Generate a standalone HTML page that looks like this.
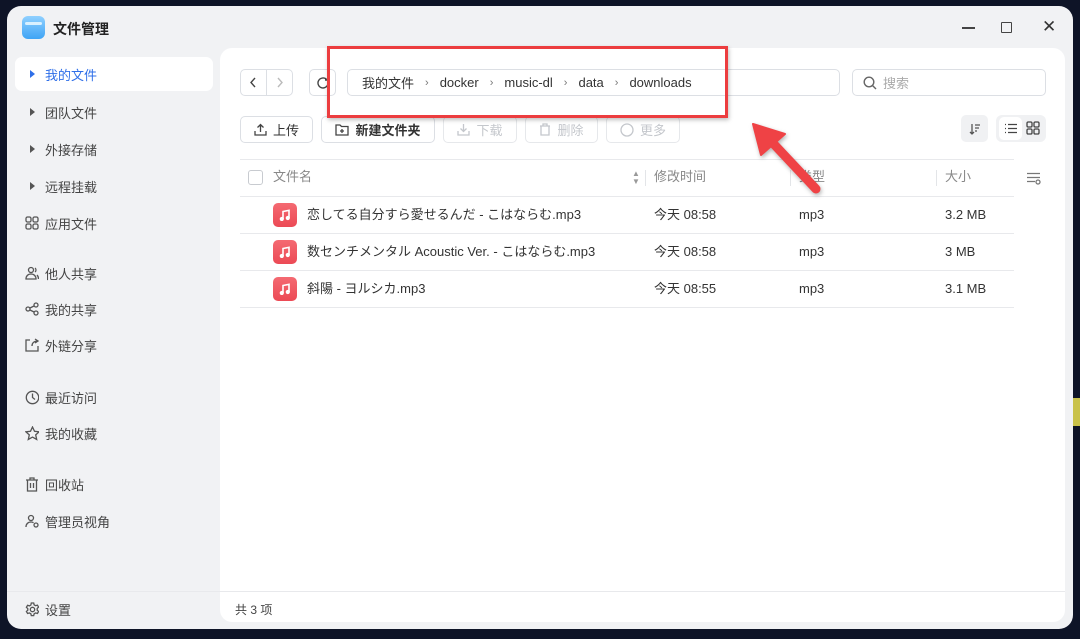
<!DOCTYPE html>
<html><head><meta charset="utf-8"><style>
*{margin:0;padding:0;box-sizing:border-box}
body{width:1080px;height:639px;overflow:hidden;background:#0e1427;font-family:"Liberation Sans","Noto Sans CJK SC",sans-serif;position:relative;color:#333}
.abs{position:absolute}
.win{left:7px;top:6px;width:1066px;height:623px;background:#f1f2f4;border-radius:14px;overflow:hidden}
.panel{left:213px;top:42px;width:845px;height:574px;background:#fff;border-radius:12px}
.nav{left:8px;width:198px;height:34px;border-radius:7px;font-size:13px;color:#444;display:flex;align-items:center}
.nav .ic{width:14px;margin-left:10px;margin-right:6px;display:flex;justify-content:center}
.tri{width:0;height:0;border-left:5px solid #555;border-top:4px solid transparent;border-bottom:4px solid transparent}
.btn{height:27px;border:1px solid #dcdfe4;border-radius:5px;font-size:13px;display:flex;align-items:center;justify-content:center;gap:6px;background:#fff}
.dis{color:#c4c7cc;border-color:#e6e8eb}
.hl{height:1px;background:#e8e9ec}
.th{font-size:13px;color:#888;top:169px;line-height:16px}
.td{font-size:13px;color:#333;line-height:16px}
.vd{width:1px;height:16px;background:#e3e5e8;top:170px}
.mic{width:24px;height:24px;border-radius:5px;background:linear-gradient(#f46a72,#ec4a55);display:flex;align-items:center;justify-content:center}
.sep{margin:0 11px;color:#777;font-size:11px}
</style></head><body>
<div class="abs" style="left:1073px;top:398px;width:7px;height:28px;background:#c9c24a"></div>
<div class="abs win">
 <div class="abs" style="left:15px;top:10px;width:23px;height:23px;border-radius:6px;background:linear-gradient(#8fd0ff,#3fa4f5)"><div style="margin:6px 3px 0;height:3px;background:#d8f0ff;border-radius:2px"></div></div>
 <div class="abs" style="left:46px;top:13px;font-size:14px;font-weight:bold;color:#222">文件管理</div>
 <div class="abs" style="left:955px;top:21px;width:13px;height:1.5px;background:#444"></div>
 <div class="abs" style="left:994px;top:16px;width:11px;height:11px;border:1.5px solid #444;border-radius:1px"></div>
 <div class="abs" style="left:1035px;top:11px;font-size:17px;color:#333">✕</div>

 <div class="abs nav" style="top:51px;background:#fff;color:#2f6fe8"><span class="ic"><span class="tri" style="border-left-color:#2f6fe8"></span></span>我的文件</div>
 <div class="abs nav" style="top:89px"><span class="ic"><span class="tri"></span></span>团队文件</div>
 <div class="abs nav" style="top:126px"><span class="ic"><span class="tri"></span></span>外接存储</div>
 <div class="abs nav" style="top:163px"><span class="ic"><span class="tri"></span></span>远程挂载</div>
 <div class="abs nav" style="top:200px"><span class="ic"><svg width="14" height="14" fill="none" stroke="#555" stroke-width="1.3"><rect x="1" y="1" width="5" height="5" rx="1.5"/><rect x="8" y="1" width="5" height="5" rx="1.5"/><rect x="1" y="8" width="5" height="5" rx="1.5"/><rect x="8" y="8" width="5" height="5" rx="1.5"/></svg></span>应用文件</div>
 <div class="abs nav" style="top:250px"><span class="ic"><svg width="14" height="14" fill="none" stroke="#555" stroke-width="1.3"><circle cx="6" cy="4" r="2.5"/><path d="M1 13c0-3 2-5 5-5s5 2 5 5zM10 2a2.5 2.5 0 010 4M12 9c1 1 1.5 2 1.5 4"/></svg></span>他人共享</div>
 <div class="abs nav" style="top:286px"><span class="ic"><svg width="14" height="14" fill="none" stroke="#555" stroke-width="1.3"><circle cx="3" cy="7" r="2"/><circle cx="11" cy="3" r="2"/><circle cx="11" cy="11" r="2"/><path d="M5 6l4-2M5 8l4 2"/></svg></span>我的共享</div>
 <div class="abs nav" style="top:322px"><span class="ic"><svg width="14" height="14" fill="none" stroke="#555" stroke-width="1.3"><path d="M5 2H1v11h12V8M7 8c0-3 2-5 6-5M10 1l3 2-3 2"/></svg></span>外链分享</div>
 <div class="abs nav" style="top:374px"><span class="ic"><svg width="15" height="15" fill="none" stroke="#555" stroke-width="1.3"><circle cx="7.5" cy="7.5" r="6.2"/><path d="M7.5 3.5v4l2.5 2"/></svg></span>最近访问</div>
 <div class="abs nav" style="top:410px"><span class="ic"><svg width="15" height="15" fill="none" stroke="#555" stroke-width="1.3"><path d="M7.5 1l2 4.3 4.6.5-3.4 3.1 1 4.6-4.2-2.4-4.2 2.4 1-4.6L.9 5.8l4.6-.5z"/></svg></span>我的收藏</div>
 <div class="abs nav" style="top:461px"><span class="ic"><svg width="14" height="15" fill="none" stroke="#555" stroke-width="1.3"><path d="M1 3h12M5 3V1h4v2M2.5 3v11h9V3M5.5 6v5M8.5 6v5"/></svg></span>回收站</div>
 <div class="abs nav" style="top:498px"><span class="ic"><svg width="14" height="14" fill="none" stroke="#555" stroke-width="1.3"><circle cx="6" cy="4" r="2.5"/><path d="M1 13c0-3 2-5 5-5 1 0 2 .3 2.5.7"/><circle cx="11" cy="11" r="2"/></svg></span>管理员视角</div>
 <div class="abs hl" style="left:0;top:585px;width:213px"></div>
 <div class="abs nav" style="top:586px"><span class="ic"><svg width="15" height="15" fill="none" stroke="#555" stroke-width="1.3"><circle cx="7.5" cy="7.5" r="2.2"/><path d="M6.3 1h2.4l.4 1.8 1.5.9 1.8-.6 1.2 2-1.4 1.3v1.8l1.4 1.3-1.2 2-1.8-.6-1.5.9-.4 1.8H6.3l-.4-1.8-1.5-.9-1.8.6-1.2-2 1.4-1.3V6.6L1.4 5.3l1.2-2 1.8.6 1.5-.9z"/></svg></span>设置</div>

 <div class="abs panel">
  <div class="abs hl" style="left:0;top:543px;width:845px"></div>
  <div class="abs" style="left:15px;top:553px;font-size:12px;color:#444">共 3 项</div>
 </div>
</div>

<!-- toolbar -->
<div class="abs btn" style="left:240px;top:69px;width:53px"></div>
<div class="abs" style="left:266px;top:69px;width:1px;height:27px;background:#dcdfe4"></div>
<svg class="abs" style="left:249px;top:77px" width="8" height="11" fill="none" stroke="#444" stroke-width="1.4"><path d="M6 1L2 5.5 6 10"/></svg>
<svg class="abs" style="left:276px;top:77px" width="8" height="11" fill="none" stroke="#bbb" stroke-width="1.4"><path d="M2 1l4 4.5L2 10"/></svg>
<div class="abs btn" style="left:309px;top:69px;width:27px"><svg width="14" height="14" fill="none" stroke="#444" stroke-width="1.4"><path d="M12 7a5 5 0 11-1.5-3.6M12 1v3H9"/></svg></div>
<div class="abs btn" style="left:347px;top:69px;width:493px;justify-content:flex-start;padding-left:14px;gap:0;color:#333">我的文件<span class="sep">›</span>docker<span class="sep">›</span>music-dl<span class="sep">›</span>data<span class="sep">›</span>downloads</div>
<div class="abs btn" style="left:852px;top:69px;width:194px;justify-content:flex-start;padding-left:10px;color:#aaa"><svg width="14" height="14" fill="none" stroke="#666" stroke-width="1.4"><circle cx="6" cy="6" r="4.8"/><path d="M9.5 9.5L13 13"/></svg>搜索</div>

<div class="abs btn" style="left:240px;top:116px;width:73px"><svg width="13" height="13" fill="none" stroke="#444" stroke-width="1.3"><path d="M6.5 9V1.5M3.5 4.5l3-3 3 3M1 8v4h11V8"/></svg>上传</div>
<div class="abs btn" style="left:321px;top:116px;width:114px;font-weight:bold"><svg width="14" height="13" fill="none" stroke="#444" stroke-width="1.3"><path d="M1 2h4l1.5 1.5H13V12H1zM7 6v4M5 8h4"/></svg>新建文件夹</div>
<div class="abs btn dis" style="left:443px;top:116px;width:74px"><svg width="13" height="13" fill="none" stroke="#c4c7cc" stroke-width="1.3"><path d="M6.5 1v7.5M3.5 5.5l3 3 3-3M1 8v4h11V8"/></svg>下载</div>
<div class="abs btn dis" style="left:525px;top:116px;width:73px"><svg width="12" height="13" fill="none" stroke="#c4c7cc" stroke-width="1.3"><path d="M1 3h10M4 3V1h4v2M2 3v9h8V3"/></svg>删除</div>
<div class="abs btn dis" style="left:606px;top:116px;width:74px"><svg width="14" height="14" fill="none" stroke="#c4c7cc" stroke-width="1.3"><circle cx="7" cy="7" r="6"/></svg>更多</div>

<div class="abs" style="left:961px;top:115px;width:27px;height:27px;background:#f0f1f3;border-radius:5px;display:flex;align-items:center;justify-content:center"><svg width="12" height="12" fill="none" stroke="#555" stroke-width="1.3"><path d="M3 1v10M1 9l2 2 2-2M6 2h5M6 5h4M6 8h2"/></svg></div>
<div class="abs" style="left:996px;top:115px;width:50px;height:27px;background:#f0f1f3;border-radius:6px"></div>
<div class="abs" style="left:999px;top:117px;width:23px;height:23px;background:#fff;border-radius:5px;display:flex;align-items:center;justify-content:center"><svg width="13" height="11" fill="none" stroke="#444" stroke-width="1.3"><path d="M1 1.5h1M1 5.5h1M1 9.5h1M4 1.5h9M4 5.5h9M4 9.5h9"/></svg></div>
<div class="abs" style="left:1026px;top:121px"><svg width="14" height="14" fill="none" stroke="#444" stroke-width="1.3"><rect x="1" y="1" width="5" height="5" rx="1.3"/><rect x="8" y="1" width="5" height="5" rx="1.3"/><rect x="1" y="8" width="5" height="5" rx="1.3"/><rect x="8" y="8" width="5" height="5" rx="1.3"/></svg></div>

<!-- table -->
<div class="abs hl" style="left:240px;top:159px;width:774px"></div>
<div class="abs" style="left:248px;top:170px;width:15px;height:15px;border:1px solid #c8cbd0;border-radius:3px"></div>
<div class="abs th" style="left:273px">文件名</div>
<div class="abs" style="left:632px;top:170px;font-size:8px;line-height:8px;color:#999">▲<br>▼</div>
<div class="abs vd" style="left:645px"></div>
<div class="abs th" style="left:654px">修改时间</div>
<div class="abs vd" style="left:790px"></div>
<div class="abs th" style="left:799px">类型</div>
<div class="abs vd" style="left:936px"></div>
<div class="abs th" style="left:945px">大小</div>
<div class="abs" style="left:1026px;top:172px"><svg width="15" height="13" fill="none" stroke="#777" stroke-width="1.3"><path d="M1 1.5h13M1 5.5h13M1 9.5h8"/><circle cx="12" cy="10" r="2"/></svg></div>
<div class="abs hl" style="left:240px;top:196px;width:774px"></div>
<div class="abs hl" style="left:240px;top:233px;width:774px"></div>
<div class="abs hl" style="left:240px;top:270px;width:774px"></div>
<div class="abs hl" style="left:240px;top:307px;width:774px"></div>

<div class="abs mic" style="left:273px;top:203px"><svg width="12" height="12" fill="none" stroke="#fff" stroke-width="1.6"><path d="M4 10V2.5l6-1.2V9"/><circle cx="2.8" cy="10" r="1.3" fill="#fff"/><circle cx="8.8" cy="9" r="1.3" fill="#fff"/></svg></div>
<div class="abs td" style="left:307px;top:207px">恋してる自分すら愛せるんだ - こはならむ.mp3</div>
<div class="abs td" style="left:654px;top:207px">今天 08:58</div><div class="abs td" style="left:799px;top:207px">mp3</div><div class="abs td" style="left:945px;top:207px">3.2 MB</div>

<div class="abs mic" style="left:273px;top:240px"><svg width="12" height="12" fill="none" stroke="#fff" stroke-width="1.6"><path d="M4 10V2.5l6-1.2V9"/><circle cx="2.8" cy="10" r="1.3" fill="#fff"/><circle cx="8.8" cy="9" r="1.3" fill="#fff"/></svg></div>
<div class="abs td" style="left:307px;top:244px">数センチメンタル Acoustic Ver. - こはならむ.mp3</div>
<div class="abs td" style="left:654px;top:244px">今天 08:58</div><div class="abs td" style="left:799px;top:244px">mp3</div><div class="abs td" style="left:945px;top:244px">3 MB</div>

<div class="abs mic" style="left:273px;top:277px"><svg width="12" height="12" fill="none" stroke="#fff" stroke-width="1.6"><path d="M4 10V2.5l6-1.2V9"/><circle cx="2.8" cy="10" r="1.3" fill="#fff"/><circle cx="8.8" cy="9" r="1.3" fill="#fff"/></svg></div>
<div class="abs td" style="left:307px;top:281px">斜陽 - ヨルシカ.mp3</div>
<div class="abs td" style="left:654px;top:281px">今天 08:55</div><div class="abs td" style="left:799px;top:281px">mp3</div><div class="abs td" style="left:945px;top:281px">3.1 MB</div>

<!-- annotation -->
<div class="abs" style="left:327px;top:46px;width:401px;height:72px;border:3px solid #ec3d3f;box-shadow:1px 2px 4px rgba(0,0,0,.25)"></div>
<svg class="abs" style="left:0;top:0" width="1080" height="639"><g filter="drop-shadow(1px 2px 2px rgba(0,0,0,.3))"><path d="M816 189L770 140" stroke="#ef4245" stroke-width="9" stroke-linecap="round"/><path d="M753 124L785 134 761 155z" fill="#ef4245" stroke="#ef4245" stroke-width="2" stroke-linejoin="round"/></g></svg>
</body></html>
